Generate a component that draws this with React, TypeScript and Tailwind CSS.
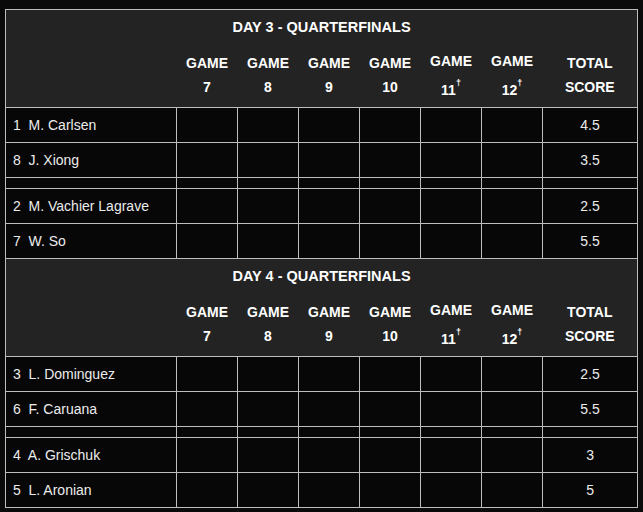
const games = ['7', '8', '9', '10', '11', '12'];

type Player = { seed: number; name: string; total: string };

const days: { title: string; pairs: Player[][] }[] = [
  {
    title: 'DAY 3 - QUARTERFINALS',
    pairs: [
      [{ seed: 1, name: 'M. Carlsen', total: '4.5' }, { seed: 8, name: 'J. Xiong', total: '3.5' }],
      [{ seed: 2, name: 'M. Vachier Lagrave', total: '2.5' }, { seed: 7, name: 'W. So', total: '5.5' }],
    ],
  },
  {
    title: 'DAY 4 - QUARTERFINALS',
    pairs: [
      [{ seed: 3, name: 'L. Dominguez', total: '2.5' }, { seed: 6, name: 'F. Caruana', total: '5.5' }],
      [{ seed: 4, name: 'A. Grischuk', total: '3' }, { seed: 5, name: 'L. Aronian', total: '5' }],
    ],
  },
];

const cell = 'border border-[#bdbdbd] p-0';
const tiebreak = (g: string) => g === '11' || g === '12';

function PlayerRow({ p }: { p: Player }) {
  return (
    <tr className="h-[35px] bg-[#070707]">
      <td className={`${cell} pl-[7px] text-left whitespace-pre`}>{`${p.seed}  ${p.name}`}</td>
      {games.map(g => <td key={g} className={cell} />)}
      <td className={`${cell} text-center`}>{p.total}</td>
    </tr>
  );
}

function Spacer() {
  return (
    <tr className="h-[11px] bg-[#070707]">
      <td className={cell} />
      {games.map(g => <td key={g} className={cell} />)}
      <td className={cell} />
    </tr>
  );
}

export default function App() {
  return (
    <div className="w-[643px] h-[512px] bg-[#0a0a0a] pt-[9px] pl-[5px] overflow-hidden font-['Liberation_Sans',Arial,sans-serif] text-[14px] text-[#ececec]">
      <table className="table-fixed border-collapse w-[633px]">
        <colgroup>
          <col className="w-[171px]" />
          {games.map(g => <col key={g} className="w-[61px]" />)}
          <col className="w-[95px]" />
        </colgroup>
        <tbody>
          {days.map(day => (
            <>
              <tr key={day.title + 'h'} className="bg-[#232323] h-[34px] border-x border-t border-[#bdbdbd]">
                <td colSpan={8} className="text-center font-bold text-[14.5px] text-white pt-[2px]">{day.title}</td>
              </tr>
              <tr key={day.title + 'g'} className="bg-[#232323] h-[64px] border-x border-b border-[#bdbdbd] font-bold text-white leading-[24px]">
                <td />
                {games.map(g => (
                  <td key={g} className="text-center">
                    <div>GAME</div>
                    {tiebreak(g) ? (
                      <div className="pt-[5px]">
                        {g}
                        <sup className="text-[9px] top-[-9px]">†</sup>
                      </div>
                    ) : (
                      <div>{g}</div>
                    )}
                  </td>
                ))}
                <td className="text-center">TOTAL<br />SCORE</td>
              </tr>
              <PlayerRow p={day.pairs[0][0]} />
              <PlayerRow p={day.pairs[0][1]} />
              <Spacer />
              <PlayerRow p={day.pairs[1][0]} />
              <PlayerRow p={day.pairs[1][1]} />
            </>
          ))}
        </tbody>
      </table>
    </div>
  );
}
